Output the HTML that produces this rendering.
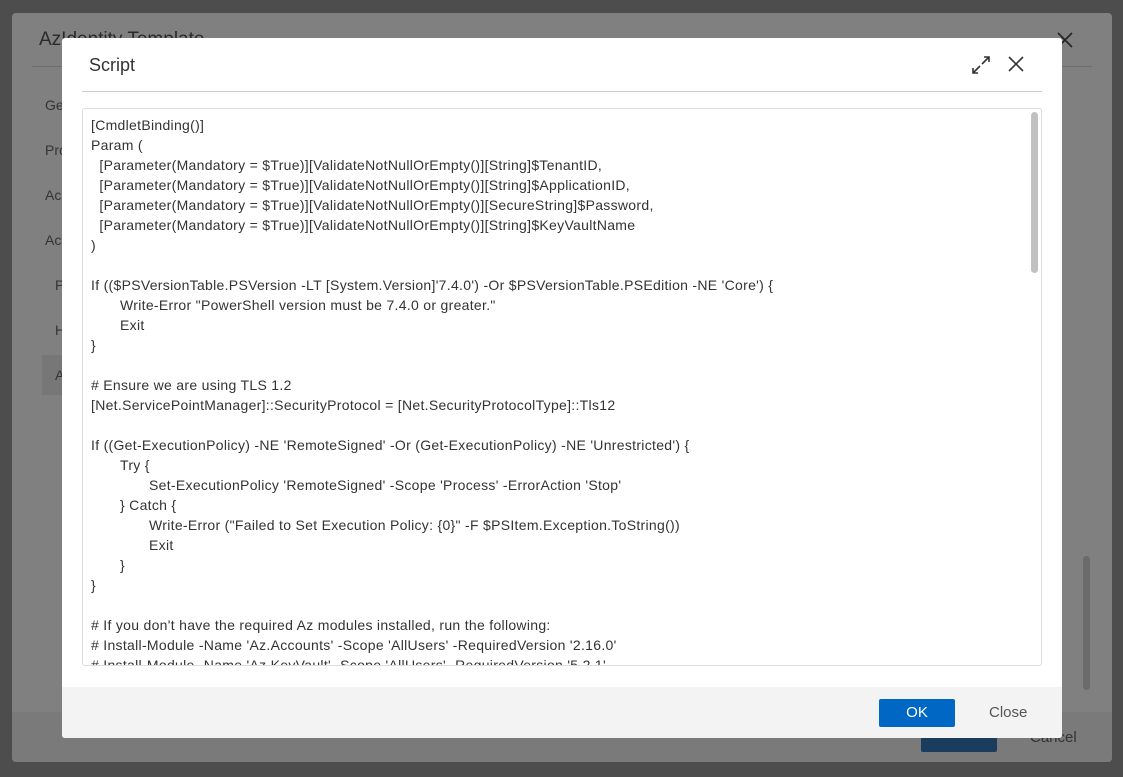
<!DOCTYPE html>
<html><head><meta charset="utf-8"><style>
*{margin:0;padding:0;box-sizing:border-box}
body{width:1123px;height:777px;background:#4d4d4d;position:relative;overflow:hidden;font-family:"Liberation Sans",sans-serif}
.back{position:absolute;left:12px;top:13px;width:1100px;height:749px;background:#808080;border-radius:4px}
.back .t{position:absolute;left:27px;top:16px;font-size:19px;color:#2a2a2a}
.back .ln{position:absolute;left:20px;right:20px;top:53px;height:1px;background:#6d6d6d}
.back .nav{position:absolute;left:33px;font-size:14px;color:#333}
.back .foot{position:absolute;left:0;right:0;bottom:0;height:50px;background:#7a7a7a;border-radius:0 0 4px 4px}
.front{position:absolute;left:62px;top:38px;width:1000px;height:700px;background:#fff;border-radius:3px;overflow:hidden}
.front h1{position:absolute;left:27px;top:17px;font-size:18px;font-weight:normal;color:#333}
.sep{position:absolute;left:20px;right:20px;top:53px;height:1px;background:#ccc}
.box{position:absolute;left:20px;top:70px;width:960px;height:558px;border:1px solid #ddd;border-radius:3px;overflow:hidden}
pre{position:absolute;left:8px;top:6px;font-family:"Liberation Sans",sans-serif;font-size:14px;letter-spacing:0.3px;line-height:20px;color:#333;tab-size:29px;-moz-tab-size:29px;white-space:pre}
.thumb{position:absolute;right:3px;top:3px;width:7px;height:161px;background:#c1c1c1;border-radius:4px}
.ff{position:absolute;left:0;right:0;bottom:0;height:51px;background:#f3f3f3}
.ok{position:absolute;left:817px;top:12px;width:76px;height:28px;background:#0067c5;color:#fff;font-size:15px;text-align:center;line-height:28px;border-radius:2px}
.cl{position:absolute;left:927px;top:17px;font-size:15px;color:#555}
</style></head><body>
<div class="back">
<div class="t">AzIdentity Template</div>
<div class="ln"></div>
<div class="nav" style="top:84px">General</div>
<div class="nav" style="top:129px">Properties</div>
<div class="nav" style="top:174px">Access</div>
<div class="nav" style="top:219px">Actions</div>
<div style="position:absolute;left:30px;top:342px;width:30px;height:40px;background:#777"></div>
<div class="nav" style="top:264px;left:43px">P</div>
<div class="nav" style="top:309px;left:43px">H</div>
<div class="nav" style="top:354px;left:43px">A</div>
<div style="position:absolute;left:1071px;top:543px;width:7px;height:134px;background:#6a6a6a;border-radius:4px"></div>
<div class="foot"></div>
<div style="position:absolute;left:909px;top:715px;width:76px;height:24px;background:#1a3d5e;border-radius:2px"></div>
<div style="position:absolute;left:1018px;top:716px;color:#333;font-size:15px">Cancel</div>
</div>
<svg style="position:absolute;left:1057px;top:32px" width="16" height="16" viewBox="0 0 16 16" stroke="#222" stroke-width="1.6"><path d="M1 1l14 14M15 1L1 15"/></svg>
<div class="front">
<h1>Script</h1>
<svg style="position:absolute;left:908px;top:16px" width="22" height="22" viewBox="0 0 22 22" fill="none" stroke="#333" stroke-width="1.6"><path d="M12 10l7-7M14 3h5v5M10 12l-7 7M3 14v5h5"/></svg>
<svg style="position:absolute;left:945px;top:17px" width="18" height="18" viewBox="0 0 18 18" stroke="#333" stroke-width="1.6"><path d="M2 2l14 14M16 2L2 16"/></svg>
<div class="sep"></div>
<div class="box"><pre>[CmdletBinding()]
Param (
  [Parameter(Mandatory = $True)][ValidateNotNullOrEmpty()][String]$TenantID,
  [Parameter(Mandatory = $True)][ValidateNotNullOrEmpty()][String]$ApplicationID,
  [Parameter(Mandatory = $True)][ValidateNotNullOrEmpty()][SecureString]$Password,
  [Parameter(Mandatory = $True)][ValidateNotNullOrEmpty()][String]$KeyVaultName
)

If (($PSVersionTable.PSVersion -LT [System.Version]'7.4.0') -Or $PSVersionTable.PSEdition -NE 'Core') {
	Write-Error "PowerShell version must be 7.4.0 or greater."
	Exit
}

# Ensure we are using TLS 1.2
[Net.ServicePointManager]::SecurityProtocol = [Net.SecurityProtocolType]::Tls12

If ((Get-ExecutionPolicy) -NE 'RemoteSigned' -Or (Get-ExecutionPolicy) -NE 'Unrestricted') {
	Try {
		Set-ExecutionPolicy 'RemoteSigned' -Scope 'Process' -ErrorAction 'Stop'
	} Catch {
		Write-Error ("Failed to Set Execution Policy: {0}" -F $PSItem.Exception.ToString())
		Exit
	}
}

# If you don't have the required Az modules installed, run the following:
# Install-Module -Name 'Az.Accounts' -Scope 'AllUsers' -RequiredVersion '2.16.0'
# Install-Module -Name 'Az.KeyVault' -Scope 'AllUsers' -RequiredVersion '5.2.1'</pre><div class="thumb"></div></div>
<div class="ff"><div class="ok">OK</div><div class="cl">Close</div></div>
</div>
</body></html>
